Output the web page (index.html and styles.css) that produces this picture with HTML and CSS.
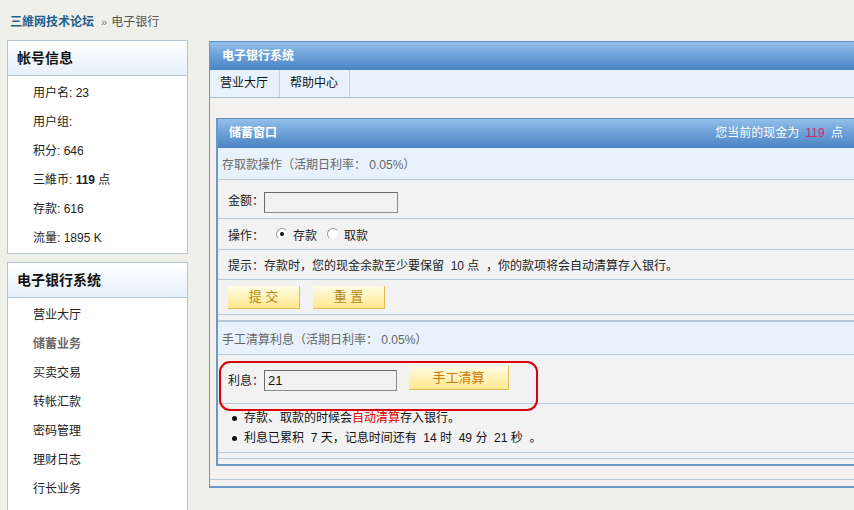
FILE: index.html
```html
<!DOCTYPE html>
<html lang="zh">
<head>
<meta charset="utf-8">
<title>电子银行</title>
<link rel="stylesheet" href="styles.css">
</head>
<body>
<div class="page">
  <div class="crumb"><a class="crumb-home">三維网技术论坛</a><span class="crumb-sep">»</span><span class="crumb-cur">电子银行</span></div>
  <div class="layout">
    <aside class="side">
      <div class="sbox">
        <div class="sbox-head">帐号信息</div>
        <ul class="slist">
          <li>用户名: 23</li>
          <li>用户组:</li>
          <li>积分: 646</li>
          <li>三維币: <b>119</b> 点</li>
          <li>存款: 616</li>
          <li>流量: 1895 K</li>
        </ul>
      </div>
      <div class="sbox sbox2">
        <div class="sbox-head">电子银行系统</div>
        <ul class="slist">
          <li>营业大厅</li>
          <li class="cur">储蓄业务</li>
          <li>买卖交易</li>
          <li>转帐汇款</li>
          <li>密码管理</li>
          <li>理财日志</li>
          <li>行长业务</li>
        </ul>
      </div>
    </aside>
    <main class="main">
      <div class="mhead">电子银行系统</div>
      <div class="tabs"><span class="tab">营业大厅</span><span class="tab">帮助中心</span></div>
      <div class="mbody">
        <div class="inner">
          <div class="ihead"><span class="ititle">储蓄窗口</span><span class="icash">您当前的现金为 <em>119</em> 点</span></div>
          <div class="row row-sub">存取款操作（活期日利率： 0.05%）</div>
          <div class="row row-amt"><span class="lbl">金额：</span><span class="inp"></span></div>
          <div class="row row-op"><span class="lbl2">操作：</span><span class="radio on"></span><span class="rtxt">存款</span><span class="radio"></span><span class="rtxt">取款</span></div>
          <div class="row row-tip">提示：存款时，您的现金余款至少要保留 &nbsp;10 点 &nbsp;，你的款项将会自动清算存入银行。</div>
          <div class="row row-btn"><span class="btn">提 交</span><span class="btn">重 置</span></div>
          <div class="gap"></div>
          <div class="row row-sub row-sub2">手工清算利息（活期日利率： 0.05%）</div>
          <div class="row row-int"><span class="lbl">利息：</span><span class="inp inp2">21</span><span class="btn btn-big">手工清算</span><span class="mark"></span></div>
          <ul class="row bullets">
            <li>存款、取款的时候会<span class="red">自动清算</span>存入银行。</li>
            <li>利息已累积 &nbsp;7 天，记息时间还有 &nbsp;14 时 &nbsp;49 分 &nbsp;21 秒 &nbsp;。</li>
          </ul>
          <div class="gap gap2"></div>
          <div class="gap3"></div>
        </div>
      </div>
      <div class="mfoot"></div>
    </main>
  </div>
</div>
</body>
</html>
```

FILE: styles.css
```css
html, body { margin: 0; padding: 0; overflow: hidden; }
body {
  background: #f0f0ea;
  font-family: "Liberation Sans", "Noto Sans CJK SC", sans-serif;
  font-size: 12px;
  color: #222;
}
.page { width: 880px; }
.crumb {
  height: 40px;
  line-height: 36px;
  padding-top: 4px;
  padding-left: 10px;
  box-sizing: border-box;
}
.crumb-home { color: #1f5f8e; font-weight: bold; font-size: 12px; }
.crumb-sep { color: #777; margin: 0 4px 0 7px; font-size: 11px; }
.crumb-cur { color: #555; }

.layout { display: flex; align-items: flex-start; }
.side { width: 181px; margin-left: 7px; }
.sbox {
  background: #fff;
  border: 1px solid #b4c4d2;
}
.sbox2 { margin-top: 8px; }
.sbox-head {
  height: 34px;
  line-height: 34px;
  padding-left: 9px;
  font-size: 14px;
  font-weight: bold;
  color: #111;
  background: linear-gradient(#ffffff, #e6f0fa);
  border-bottom: 1px solid #b4c4d2;
}
.slist { list-style: none; margin: 0; padding: 3px 0 0 0; }
.slist li {
  height: 29px;
  line-height: 29px;
  padding-left: 25px;
  color: #222;
}
.sbox2 .slist { padding-bottom: 20px; }
.slist li.cur { font-weight: bold; color: #6a6a6a; }

.main {
  width: 653px;
  margin-left: 21px;
  margin-top: 1px;
  border-left: 1px solid #6a98c8;
  border-top: 1px solid #5f8cc0;
  border-bottom: 2px solid #6a98c8;
  background: #f3f2ee;
}
.mhead {
  height: 28px;
  line-height: 28px;
  padding-left: 12px;
  color: #fff;
  font-weight: bold;
  background: linear-gradient(#94bfea, #6fa2d8 45%, #4a84c4);
}
.tabs {
  height: 27px;
  display: flex;
  background: #e8f2fc;
  border-bottom: 1px solid #a4bcd4;
}
.tab {
  line-height: 27px;
  padding: 0 11px 0 10px;
  border-right: 1px solid #c4d2e0;
  color: #111;
}
.mbody { padding: 20px 0 13px 6px; border-bottom: 1px solid #b8c8d8; }
.mfoot { height: 6px; }

.inner {
  border-left: 2px solid #6a98c8;
  border-top: 1px solid #5f8cc0;
  border-bottom: 2px solid #6a98c8;
  background: #f2f2f2;
}
.ihead {
  height: 29px;
  line-height: 29px;
  display: flex;
  justify-content: space-between;
  padding: 0 20px 0 11px;
  color: #fff;
  background: linear-gradient(#94bfea, #6fa2d8 45%, #4a84c4);
}
.ititle { font-weight: bold; }
.icash em { font-style: normal; color: #e0206a; margin: 0 3px; }

.row { border-bottom: 1px solid #b8c8d8; display: flex; align-items: center; padding-left: 10px; box-sizing: content-box; }
.row-sub { height: 31px; background: #e8f2fc; color: #666; padding-left: 4px; }
.row-sub2 { border-top: 1px solid #b8c8d8; height: 32px; }
.row-amt { height: 38px; }
.row-op { height: 30px; }
.row-tip { height: 29px; }
.row-btn { height: 34px; }
.row-int { height: 48px; position: relative; }
.lbl { width: 36px; }
.lbl2 { width: 48px; }
.inp {
  width: 131px;
  height: 19px;
  border: 1px solid #6b6b6b;
  border-right-color: #8a8a8a;
  border-bottom-color: #8a8a8a;
  background: #f1f1f1;
  line-height: 19px;
  padding-left: 3px;
  box-sizing: content-box;
  font-size: 13px;
  color: #111;
}
.row-amt .inp { width: 129px; margin-top: 6px; }
.inp2 { width: 128px; margin-top: 2px; }
.radio {
  width: 10px;
  height: 10px;
  border-radius: 50%;
  border: 1px solid #999;
  border-right-color: #eee;
  border-bottom-color: #eee;
  background: #fff;
  position: relative;
  margin-right: 5px;
}
.radio.on::after {
  content: "";
  position: absolute;
  left: 3px; top: 3px;
  width: 4px; height: 4px;
  border-radius: 50%;
  background: #111;
}
.rtxt { margin-right: 10px; }
.btn {
  display: inline-block;
  width: 71px;
  height: 22px;
  line-height: 22px;
  text-align: center;
  color: #b88a10;
  font-size: 13px;
  background: linear-gradient(#fffce6, #fff2b8 50%, #ffe88e);
  border-right: 1px solid #e0bc58;
  border-bottom: 1px solid #e0bc58;
  margin-right: 13px;
  margin-top: 1px;
}
.btn-big {
  width: 99px;
  height: 23px;
  line-height: 23px;
  margin-left: 12px;
  color: #d07800;
  margin-top: -2px;
}
.mark {
  position: absolute;
  left: 1px;
  top: 6px;
  width: 315px;
  height: 46px;
  border: 2px solid #d8000a;
  border-radius: 11px;
}
.bullets {
  list-style: none;
  margin: 0;
  height: 48px;
  padding: 0 0 0 14px;
  flex-direction: column;
  align-items: flex-start;
  justify-content: center;
}
.bullets li {
  line-height: 20px;
  position: relative;
  padding-left: 12px;
  color: #111;
}
.bullets li::before {
  content: "";
  position: absolute;
  left: 0;
  top: 8px;
  width: 5px;
  height: 5px;
  border-radius: 50%;
  background: #111;
}
.red { color: #e00000; }
.gap { height: 5px; border-bottom: 1px solid #b8c8d8; }
.gap2 { height: 5px; }
.gap3 { height: 5px; }
```
